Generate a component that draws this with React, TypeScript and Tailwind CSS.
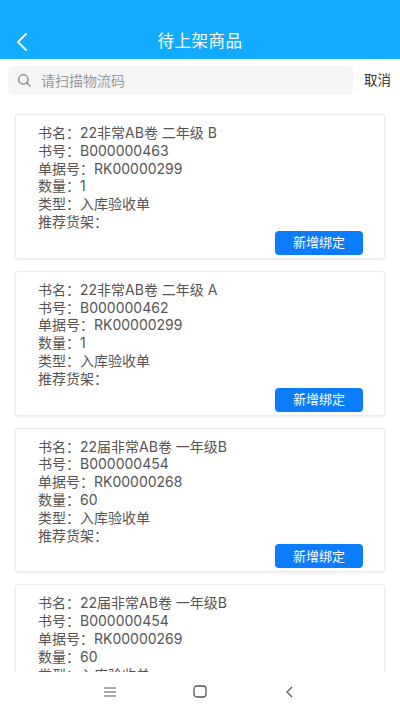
import React from "react";

type Item = { name: string; no: string; bill: string; qty: string };

const items: Item[] = [
  { name: "22非常AB卷 二年级 B", no: "B000000463", bill: "RK00000299", qty: "1" },
  { name: "22非常AB卷 二年级 A", no: "B000000462", bill: "RK00000299", qty: "1" },
  { name: "22届非常AB卷 一年级B", no: "B000000454", bill: "RK00000268", qty: "60" },
  { name: "22届非常AB卷 一年级B", no: "B000000454", bill: "RK00000269", qty: "60" },
];

function Card({ it }: { it: Item }) {
  return (
    <div className="mx-[15px] shrink-0 rounded-[3px] border border-[#ebebeb] bg-white pl-[22px] pr-[21px] pt-[9px] pb-[3px] shadow-[0_1px_3px_rgba(0,0,0,0.08)]">
      <div className="text-[14px] leading-[17.8px] text-[#555]">
        <div>书名：{it.name}</div>
        <div>书号：{it.no}</div>
        <div>单据号：{it.bill}</div>
        <div>数量：{it.qty}</div>
        <div>类型：入库验收单</div>
        <div>推荐货架：</div>
      </div>
      <div className="flex justify-end">
        <button className="h-[24px] w-[88px] rounded-[4px] bg-[#0b7dfa] text-[13px] text-white">
          新增绑定
        </button>
      </div>
    </div>
  );
}

export default function App() {
  return (
    <div
      className="flex h-[711px] w-[400px] flex-col overflow-hidden bg-white"
      style={{ fontFamily: 'Inter, "Noto Sans CJK SC", sans-serif' }}
    >
      <div className="relative flex h-[59px] shrink-0 items-end justify-center bg-[#13abff] pb-[7px]">
        <svg className="absolute left-[15px] top-[33px]" width="14" height="18" viewBox="0 0 14 18">
          <path d="M11 1 L3 9 L11 17" fill="none" stroke="white" strokeWidth="1.8" strokeLinecap="round" strokeLinejoin="round" />
        </svg>
        <span className="text-[16.5px] leading-[22px] tracking-[0.5px] text-white">待上架商品</span>
      </div>
      <div className="mt-[7px] flex shrink-0 items-center pl-[8px]">
        <div className="flex h-[29px] w-[345px] items-center rounded-[5px] bg-[#f5f5f5] pl-[9px]">
          <svg width="15" height="15" viewBox="0 0 16 16">
            <circle cx="6.8" cy="6.8" r="5" fill="none" stroke="#777" strokeWidth="1.3" />
            <path d="M10.5 10.5 L14 14" stroke="#777" strokeWidth="1.3" strokeLinecap="round" />
          </svg>
          <span className="ml-[9px] text-[14px] text-[#999]">请扫描物流码</span>
        </div>
        <span className="ml-[11px] text-[13.5px] text-[#333]">取消</span>
      </div>
      <div className="mt-[19px] flex min-h-0 flex-1 flex-col gap-[12px] overflow-hidden">
        {items.map((it, i) => (
          <Card key={i} it={it} />
        ))}
      </div>
      <div className="relative flex h-[39px] shrink-0 items-center justify-center gap-[76px] bg-white">
        <svg width="14" height="12" viewBox="0 0 14 12">
          <path d="M1 2 H13 M1 6 H13 M1 10 H13" stroke="#555" strokeWidth="1.2" />
        </svg>
        <svg width="14" height="13" viewBox="0 0 14 13">
          <rect x="1" y="1" width="12" height="11" rx="3" fill="none" stroke="#555" strokeWidth="1.3" />
        </svg>
        <svg width="14" height="14" viewBox="0 0 14 14">
          <path d="M9 2 L4 7 L9 12" fill="none" stroke="#555" strokeWidth="1.2" />
        </svg>
      </div>
    </div>
  );
}
